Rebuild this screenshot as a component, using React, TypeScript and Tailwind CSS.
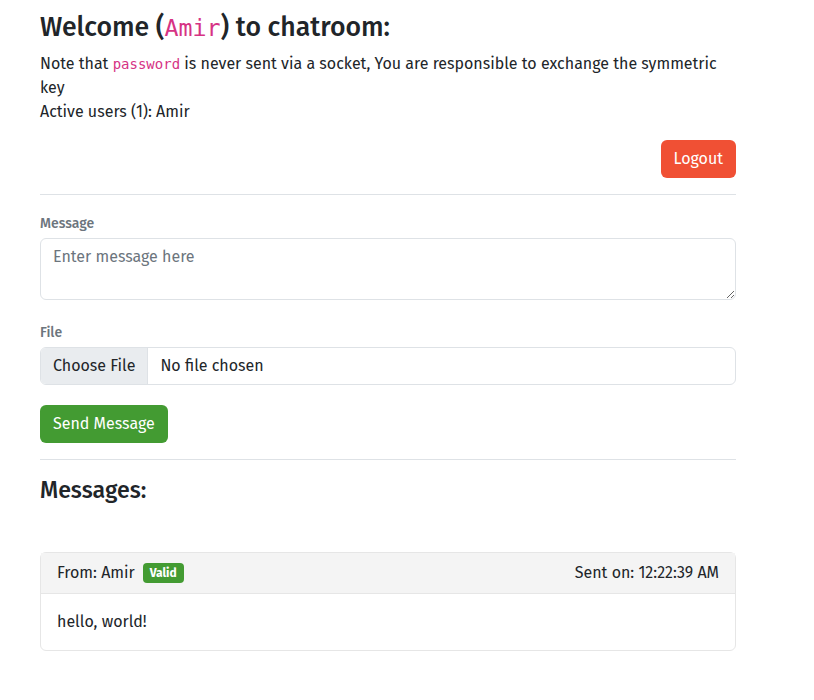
import React from "react";

const sans = "font-['Fira_Sans','Open_Sans',sans-serif]";
const mono = "font-['DejaVu_Sans_Mono','Liberation_Mono',monospace]";

function Message({ from, time, text }: { from: string; time: string; text: string }) {
  return (
    <div className="mt-[48px] rounded-md border border-[#e6e6e6] bg-white">
      <div className="flex h-[41px] items-center justify-between border-b border-[#e6e6e6] bg-[#f4f4f4] px-4">
        <div className="flex items-center">
          <span>From: {from}</span>
          <span className="ml-2 flex h-[20px] items-center rounded-[4px] bg-[#439b32] px-[7px] text-[12px] font-bold text-white">
            Valid
          </span>
        </div>
        <span>Sent on: {time}</span>
      </div>
      <div className="px-4 py-4 leading-6">{text}</div>
    </div>
  );
}

export default function App() {
  return (
    <div className={`${sans} min-h-[700px] bg-white text-[16px] leading-6 text-[#212529]`}>
      <div className="ml-[40px] w-[696px] pt-[11px]">
        <h3 className="mb-2 text-[26.6px] leading-[32px] font-medium">
          Welcome (<code className={`${mono} text-[23.3px] font-normal text-[#d63384]`}>Amir</code>) to chatroom:
        </h3>
        <p>
          Note that <code className={`${mono} text-[14px] text-[#d63384]`}>password</code> is never sent via a socket,
          You are responsible to exchange the symmetric key
        </p>
        <p>Active users (1): Amir</p>

        <div className="mt-4 flex justify-end">
          <button className="h-[38px] rounded-md bg-[#f05034] px-[13px] text-white">Logout</button>
        </div>

        <hr className="mt-4 border-t border-[#dee2e6]" />

        <label className="mt-[18px] block text-[14px] leading-[21px] font-medium text-[#6c757d]">Message</label>
        <textarea
          className="mt-[4px] block h-[62px] w-full resize-y rounded-md border border-[#dee2e6] px-3 py-[6px] leading-6 placeholder:text-[#6c757d]"
          placeholder="Enter message here"
        />

        <label className="mt-[22px] block text-[14px] leading-[21px] font-medium text-[#6c757d]">File</label>
        <div className="mt-[4px] flex h-[38px] overflow-hidden rounded-md border border-[#dee2e6]">
          <span className="flex items-center border-r border-[#dee2e6] bg-[#e9ecef] px-3 whitespace-nowrap">
            Choose File
          </span>
          <span className="flex items-center px-3 whitespace-nowrap">No file chosen</span>
        </div>

        <button className="mt-[20px] h-[38px] rounded-md bg-[#439b32] px-[13px] text-white">Send Message</button>

        <hr className="mt-4 border-t border-[#dee2e6]" />

        <h4 className="mt-4 text-[23.2px] leading-[28px] font-medium">Messages:</h4>

        <Message from="Amir" time="12:22:39 AM" text="hello, world!" />
      </div>
    </div>
  );
}
